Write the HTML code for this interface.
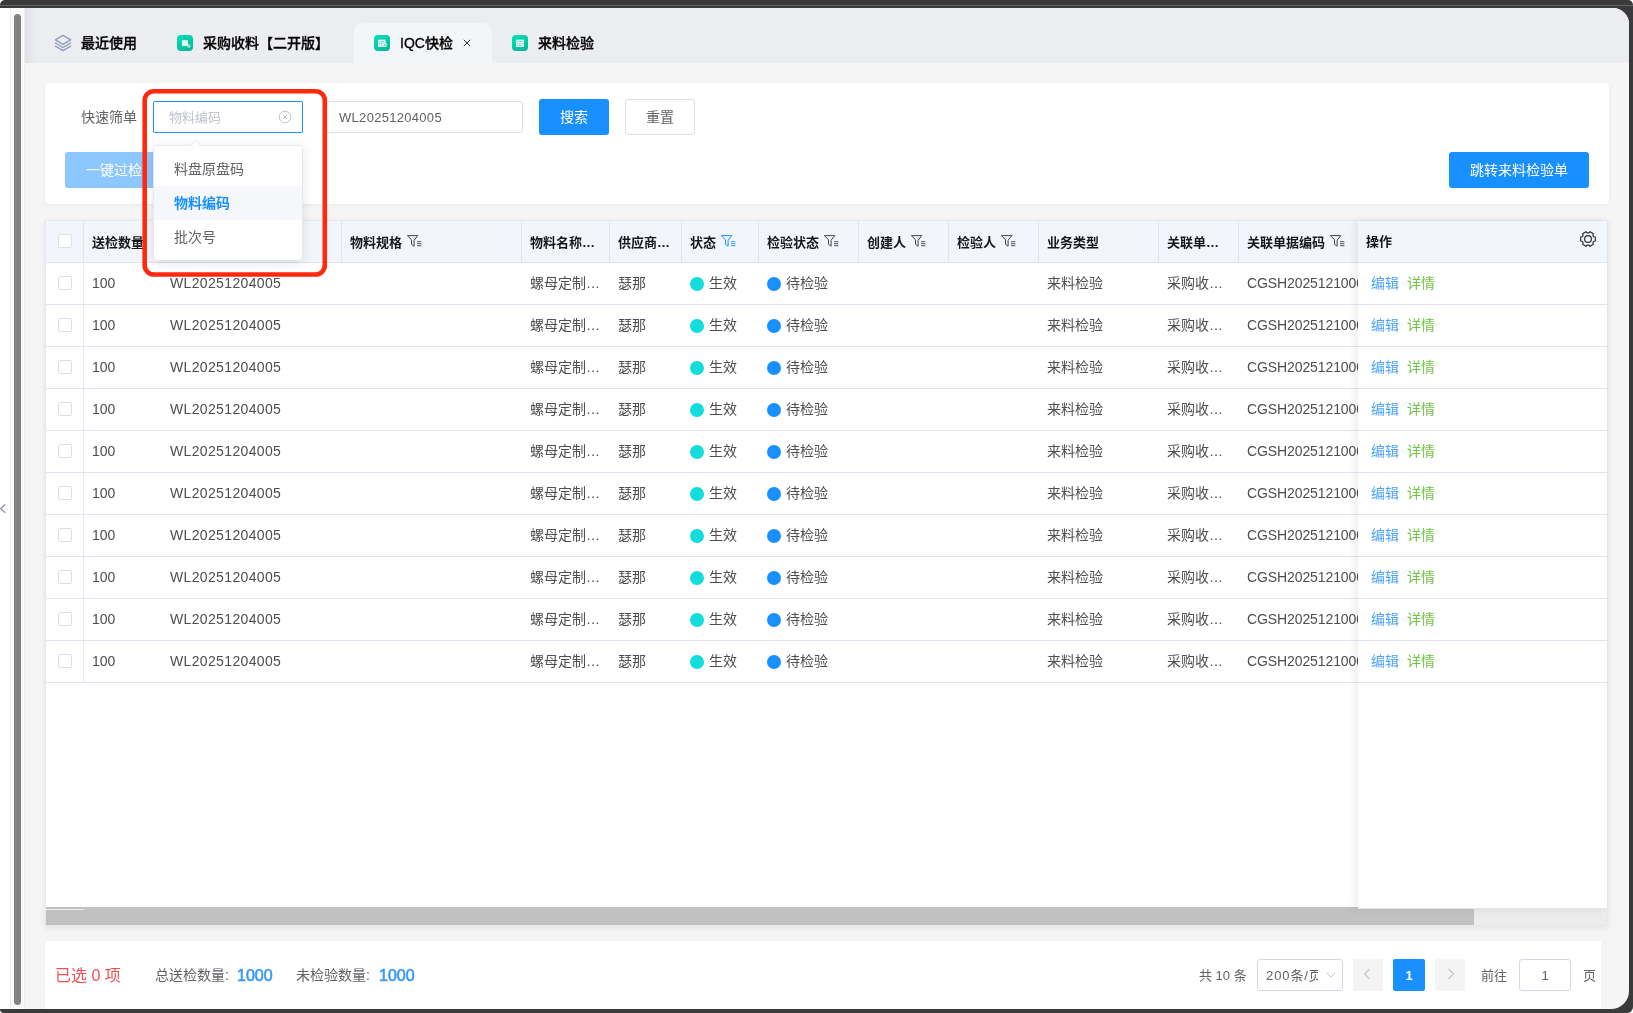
<!DOCTYPE html>
<html lang="zh-CN">
<head>
<meta charset="utf-8">
<title>IQC快检</title>
<style>
*{box-sizing:border-box;margin:0;padding:0}
html,body{width:1633px;height:1013px;overflow:hidden;background:#fff}
body{font-family:"Liberation Sans","Noto Sans CJK SC",sans-serif;font-size:13px;color:#606266;position:relative}
.abs{position:absolute}
#frame{left:0;top:0;width:1633px;height:1013px;background:#3a3a3a;border-radius:5px 5px 6px 4px}
#frameline{left:0;top:5px;width:1633px;height:1px;background:#636363}
#leftwhite{left:0;top:8px;width:10px;height:1001px;background:#fff}
#vtrack{left:10px;top:8px;width:15px;height:1001px;background:#fafafa;border-left:1px solid #ececec;border-right:1px solid #ececec}
#vthumb{left:14px;top:14px;width:7px;height:991px;background:#828282;border-radius:4px}
#app{left:25px;top:8px;width:1604px;height:1001px;background:#f5f5f5;border-radius:0 16px 18px 0;overflow:hidden}
/* everything inside #app uses page coords via offset wrapper */
#page{left:-25px;top:-8px;width:1633px;height:1013px;will-change:transform}
#tabbar{left:25px;top:8px;width:1604px;height:55px;background:#ecedf1}
#tabshadow{left:25px;top:8px;width:12px;height:55px;background:linear-gradient(90deg,rgba(0,0,0,.05),rgba(0,0,0,0))}
.tab{top:23px;height:40px;line-height:40px;font-size:14px;font-weight:500;color:#000;-webkit-text-stroke:.3px #000;white-space:nowrap}
.tab.active{background:#f4f5f9;border-radius:9px 9px 0 0}
.ticon{top:35px;width:16px;height:16px;border-radius:4px;background:linear-gradient(150deg,#06e2bc,#02b393)}
.panel{background:#fff;border-radius:4px;box-shadow:0 1px 4px rgba(0,0,0,.06)}
.btn{height:36px;line-height:36px;text-align:center;font-size:14px;border-radius:3px;color:#fff;background:#1890ff}
.inp{height:32px;border:1px solid #dcdfe6;border-radius:3px;background:#fff;line-height:30px;font-size:13px;color:#606266}

#tbl{left:45px;top:220px;width:1563px;height:706px;background:#fff;border:1px solid #e3e9f3;box-shadow:0 2px 6px rgba(0,0,0,.08)}
#thead{left:46px;top:221px;width:1561px;height:42px;background:#f2f5fc;border-bottom:1px solid #dfe6f0}
.vd{top:221px;width:1px;height:41px;background:#dfe6f0}
.th{top:222px;height:41px;line-height:41px;font-size:13px;font-weight:700;color:#15181d;white-space:nowrap}
.row{left:46px;width:1561px;height:42px;border-bottom:1px solid #dfe6f0}
.td{height:41px;line-height:41px;font-size:14px;color:#4e4e4e;white-space:nowrap;position:absolute;top:0}
.cb{width:14px;height:14px;border:1px solid #dcdfe6;border-radius:2px;background:#fff}
.dot{width:14px;height:14px;border-radius:50%;position:absolute;top:14px}
.fi{top:235px}

.ft{top:960px;height:32px;line-height:32px;white-space:nowrap}
.pg{top:959px;height:32px;background:#f4f4f5;border-radius:2px}
#redbox{left:143px;top:89px;width:184px;height:188px;border:5px solid #ff2d10;border-radius:14px}
#sel{left:153px;top:101px;width:150px;height:32px;border:1px solid #1890ff;border-radius:2px;background:#fff}
#dd{left:153px;top:145px;width:150px;height:116px;background:#fff;border:1px solid #e4e7ed;border-radius:4px;box-shadow:0 2px 12px rgba(0,0,0,.1)}
.opt{left:0;width:148px;height:34px;line-height:34px;padding-left:20px;font-size:14px;color:#606266}
</style>
</head>
<body>
<div id="frame" class="abs"></div>
<div id="frameline" class="abs"></div>
<div id="leftwhite" class="abs"></div>
<div id="vtrack" class="abs"></div>
<div id="vthumb" class="abs"></div>
<svg class="abs" style="left:0;top:502px" width="8" height="14" viewBox="0 0 8 14" fill="none" stroke="#8b90b4" stroke-width="1.200"><path d="M5.300 2.200L.7 6.500L5.300 10.800"/></svg>
<div id="app" class="abs"><div id="page" class="abs">
<div id="tabbar" class="abs"></div>
<div id="tabshadow" class="abs"></div>
<svg class="abs" style="left:54px;top:34px" width="18" height="18" viewBox="0 0 18 18" fill="none" stroke="#9298be" stroke-width="1.250" stroke-linejoin="round" stroke-linecap="round"><path d="M9 1.4 L16.6 5.9 L9 10.4 L1.4 5.9 Z"/><path d="M1.4 9 L9 13.5 L16.6 9"/><path d="M1.4 12.1 L9 16.6 L16.6 12.1"/></svg>
<div class="abs tab" style="left:81px">最近使用</div>
<div class="abs ticon" style="left:177px"></div>
<svg class="abs" style="left:177px;top:35px" width="16" height="16" viewBox="0 0 16 16"><path d="M5 5.600L5.800 5L6.600 5.600L7.400 5L8.200 5.600L9 5L9.800 5.600L10.600 5L11 5.400V11H5Z" fill="#e4faf4"/><circle cx="11.800" cy="10.900" r="1.500" fill="#5fd8bd" stroke="#d9f7ef" stroke-width=".7"/></svg>
<div class="abs tab" style="left:203px">采购收料【二开版】</div>
<div class="abs tab active" style="left:354px;width:138px"></div>
<div class="abs ticon" style="left:374px"></div>
<svg class="abs" style="left:374px;top:35px" width="16" height="16" viewBox="0 0 16 16"><path d="M4.100 5L5 4.300L5.900 5L6.900 4.300L7.900 5L8.900 4.300L9.900 5L10.800 4.300L11.600 5V12H4.100Z" fill="#e6faf5"/><path d="M5.200 6.600h.8M6.800 6.600h3.400M5.200 8.500h.8M6.800 8.500h2M5.200 10.400h.8M6.800 10.400h1.600" stroke="#3fcfb0" stroke-width=".8"/><circle cx="11" cy="9.900" r="1.800" fill="#7fe0c9" stroke="#e6faf5" stroke-width=".8"/></svg>
<div class="abs tab" style="left:400px">IQC快检</div>
<svg class="abs" style="left:463px;top:39px" width="8" height="8" viewBox="0 0 8 8" stroke="#333" stroke-width="1" fill="none"><path d="M.8 .8L7.2 7.2M7.2 .8L.8 7.2"/></svg>
<div class="abs ticon" style="left:512px"></div>
<svg class="abs" style="left:512px;top:35px" width="16" height="16" viewBox="0 0 16 16"><path d="M4.100 5L5.100 4.300L6.100 5L7.100 4.300L8.100 5L9.100 4.300L10.100 5L11.100 4.300L12 5V12H4.100Z" fill="#e6faf5"/><path d="M5.200 6.600h.9M7 6.600h3.800M5.200 8.500h.9M7 8.500h1.800M5.200 10.400h.9M7 10.400h2" stroke="#3fcfb0" stroke-width=".8"/><path d="M9.600 10.200L11.200 8.200" stroke="#3fcfb0" stroke-width="1"/></svg>
<div class="abs tab" style="left:538px">来料检验</div>

<div class="abs panel" style="left:45px;top:83px;width:1564px;height:121px"></div>
<div class="abs" style="left:81px;top:101px;height:32px;line-height:32px;font-size:14px;color:#606266">快速筛单</div>
<div class="abs inp" style="left:323px;top:101px;width:200px;padding-left:15px;line-height:32px;letter-spacing:.3px">WL20251204005</div>
<div class="abs btn" style="left:539px;top:99px;width:70px">搜索</div>
<div class="abs btn" style="left:625px;top:99px;width:70px;background:#fff;border:1px solid #dcdfe6;color:#606266;line-height:34px">重置</div>
<div class="abs btn" style="left:65px;top:152px;width:98px;background:#8cc8ff">一键过检</div>
<div class="abs btn" style="left:1449px;top:152px;width:140px">跳转来料检验单</div>

<div id="tbl" class="abs"></div>
<div id="thead" class="abs"></div>
<div class="abs vd" style="left:83px"></div><div class="abs vd" style="left:161px"></div><div class="abs vd" style="left:341px"></div><div class="abs vd" style="left:521px"></div><div class="abs vd" style="left:609px"></div><div class="abs vd" style="left:681px"></div><div class="abs vd" style="left:758px"></div><div class="abs vd" style="left:858px"></div><div class="abs vd" style="left:948px"></div><div class="abs vd" style="left:1038px"></div><div class="abs vd" style="left:1158px"></div><div class="abs vd" style="left:1238px"></div>
<div class="abs cb" style="left:58px;top:234px"></div>
<div class="abs th" style="left:92px">送检数量</div><div class="abs th" style="left:350px">物料规格</div><svg class="abs fi" style="left:407px" width="15" height="12" viewBox="0 0 15 12" fill="none" stroke="#444" stroke-width="1" stroke-linejoin="round" stroke-linecap="round"><path d="M.8 .6H10.800L7.100 5.200V11.200L4.500 9.300V5.200Z"/><path d="M10.400 6.700h3.600M10.400 8.700h3.600M10.400 10.700h3.600" stroke-width=".9"/></svg><div class="abs th" style="left:530px">物料名称…</div><div class="abs th" style="left:618px">供应商…</div><div class="abs th" style="left:690px">状态</div><svg class="abs fi" style="left:721px" width="15" height="12" viewBox="0 0 15 12" fill="none" stroke="#1890ff" stroke-width="1" stroke-linejoin="round" stroke-linecap="round"><path d="M.8 .6H10.800L7.100 5.200V11.200L4.500 9.300V5.200Z"/><path d="M10.400 6.700h3.600M10.400 8.700h3.600M10.400 10.700h3.600" stroke-width=".9"/></svg><div class="abs th" style="left:767px">检验状态</div><svg class="abs fi" style="left:824px" width="15" height="12" viewBox="0 0 15 12" fill="none" stroke="#444" stroke-width="1" stroke-linejoin="round" stroke-linecap="round"><path d="M.8 .6H10.800L7.100 5.200V11.200L4.500 9.300V5.200Z"/><path d="M10.400 6.700h3.600M10.400 8.700h3.600M10.400 10.700h3.600" stroke-width=".9"/></svg><div class="abs th" style="left:867px">创建人</div><svg class="abs fi" style="left:911px" width="15" height="12" viewBox="0 0 15 12" fill="none" stroke="#444" stroke-width="1" stroke-linejoin="round" stroke-linecap="round"><path d="M.8 .6H10.800L7.100 5.200V11.200L4.500 9.300V5.200Z"/><path d="M10.400 6.700h3.600M10.400 8.700h3.600M10.400 10.700h3.600" stroke-width=".9"/></svg><div class="abs th" style="left:957px">检验人</div><svg class="abs fi" style="left:1001px" width="15" height="12" viewBox="0 0 15 12" fill="none" stroke="#444" stroke-width="1" stroke-linejoin="round" stroke-linecap="round"><path d="M.8 .6H10.800L7.100 5.200V11.200L4.500 9.300V5.200Z"/><path d="M10.400 6.700h3.600M10.400 8.700h3.600M10.400 10.700h3.600" stroke-width=".9"/></svg><div class="abs th" style="left:1047px">业务类型</div><div class="abs th" style="left:1167px">关联单…</div><div class="abs th" style="left:1247px">关联单据编码</div><svg class="abs fi" style="left:1330px" width="15" height="12" viewBox="0 0 15 12" fill="none" stroke="#444" stroke-width="1" stroke-linejoin="round" stroke-linecap="round"><path d="M.8 .6H10.800L7.100 5.200V11.200L4.500 9.300V5.200Z"/><path d="M10.400 6.700h3.600M10.400 8.700h3.600M10.400 10.700h3.600" stroke-width=".9"/></svg>
<div class="abs row" style="top:263px"><div class="abs" style="left:37px;top:0;width:1px;height:41px;background:#e6ebf3"></div><div class="abs cb" style="left:12px;top:13px"></div><div class="td" style="left:46px">100</div><div class="td" style="left:124px;letter-spacing:.35px">WL20251204005</div><div class="td" style="left:484px">螺母定制…</div><div class="td" style="left:572px">瑟那</div><div class="dot" style="left:644px;background:#13dcdc"></div><div class="td" style="left:663px">生效</div><div class="dot" style="left:721px;background:#1890ff"></div><div class="td" style="left:740px">待检验</div><div class="td" style="left:1001px">来料检验</div><div class="td" style="left:1121px">采购收…</div><div class="td" style="left:1201px;letter-spacing:-.1px">CGSH2025121000</div></div>
<div class="abs row" style="top:305px"><div class="abs" style="left:37px;top:0;width:1px;height:41px;background:#e6ebf3"></div><div class="abs cb" style="left:12px;top:13px"></div><div class="td" style="left:46px">100</div><div class="td" style="left:124px;letter-spacing:.35px">WL20251204005</div><div class="td" style="left:484px">螺母定制…</div><div class="td" style="left:572px">瑟那</div><div class="dot" style="left:644px;background:#13dcdc"></div><div class="td" style="left:663px">生效</div><div class="dot" style="left:721px;background:#1890ff"></div><div class="td" style="left:740px">待检验</div><div class="td" style="left:1001px">来料检验</div><div class="td" style="left:1121px">采购收…</div><div class="td" style="left:1201px;letter-spacing:-.1px">CGSH2025121000</div></div>
<div class="abs row" style="top:347px"><div class="abs" style="left:37px;top:0;width:1px;height:41px;background:#e6ebf3"></div><div class="abs cb" style="left:12px;top:13px"></div><div class="td" style="left:46px">100</div><div class="td" style="left:124px;letter-spacing:.35px">WL20251204005</div><div class="td" style="left:484px">螺母定制…</div><div class="td" style="left:572px">瑟那</div><div class="dot" style="left:644px;background:#13dcdc"></div><div class="td" style="left:663px">生效</div><div class="dot" style="left:721px;background:#1890ff"></div><div class="td" style="left:740px">待检验</div><div class="td" style="left:1001px">来料检验</div><div class="td" style="left:1121px">采购收…</div><div class="td" style="left:1201px;letter-spacing:-.1px">CGSH2025121000</div></div>
<div class="abs row" style="top:389px"><div class="abs" style="left:37px;top:0;width:1px;height:41px;background:#e6ebf3"></div><div class="abs cb" style="left:12px;top:13px"></div><div class="td" style="left:46px">100</div><div class="td" style="left:124px;letter-spacing:.35px">WL20251204005</div><div class="td" style="left:484px">螺母定制…</div><div class="td" style="left:572px">瑟那</div><div class="dot" style="left:644px;background:#13dcdc"></div><div class="td" style="left:663px">生效</div><div class="dot" style="left:721px;background:#1890ff"></div><div class="td" style="left:740px">待检验</div><div class="td" style="left:1001px">来料检验</div><div class="td" style="left:1121px">采购收…</div><div class="td" style="left:1201px;letter-spacing:-.1px">CGSH2025121000</div></div>
<div class="abs row" style="top:431px"><div class="abs" style="left:37px;top:0;width:1px;height:41px;background:#e6ebf3"></div><div class="abs cb" style="left:12px;top:13px"></div><div class="td" style="left:46px">100</div><div class="td" style="left:124px;letter-spacing:.35px">WL20251204005</div><div class="td" style="left:484px">螺母定制…</div><div class="td" style="left:572px">瑟那</div><div class="dot" style="left:644px;background:#13dcdc"></div><div class="td" style="left:663px">生效</div><div class="dot" style="left:721px;background:#1890ff"></div><div class="td" style="left:740px">待检验</div><div class="td" style="left:1001px">来料检验</div><div class="td" style="left:1121px">采购收…</div><div class="td" style="left:1201px;letter-spacing:-.1px">CGSH2025121000</div></div>
<div class="abs row" style="top:473px"><div class="abs" style="left:37px;top:0;width:1px;height:41px;background:#e6ebf3"></div><div class="abs cb" style="left:12px;top:13px"></div><div class="td" style="left:46px">100</div><div class="td" style="left:124px;letter-spacing:.35px">WL20251204005</div><div class="td" style="left:484px">螺母定制…</div><div class="td" style="left:572px">瑟那</div><div class="dot" style="left:644px;background:#13dcdc"></div><div class="td" style="left:663px">生效</div><div class="dot" style="left:721px;background:#1890ff"></div><div class="td" style="left:740px">待检验</div><div class="td" style="left:1001px">来料检验</div><div class="td" style="left:1121px">采购收…</div><div class="td" style="left:1201px;letter-spacing:-.1px">CGSH2025121000</div></div>
<div class="abs row" style="top:515px"><div class="abs" style="left:37px;top:0;width:1px;height:41px;background:#e6ebf3"></div><div class="abs cb" style="left:12px;top:13px"></div><div class="td" style="left:46px">100</div><div class="td" style="left:124px;letter-spacing:.35px">WL20251204005</div><div class="td" style="left:484px">螺母定制…</div><div class="td" style="left:572px">瑟那</div><div class="dot" style="left:644px;background:#13dcdc"></div><div class="td" style="left:663px">生效</div><div class="dot" style="left:721px;background:#1890ff"></div><div class="td" style="left:740px">待检验</div><div class="td" style="left:1001px">来料检验</div><div class="td" style="left:1121px">采购收…</div><div class="td" style="left:1201px;letter-spacing:-.1px">CGSH2025121000</div></div>
<div class="abs row" style="top:557px"><div class="abs" style="left:37px;top:0;width:1px;height:41px;background:#e6ebf3"></div><div class="abs cb" style="left:12px;top:13px"></div><div class="td" style="left:46px">100</div><div class="td" style="left:124px;letter-spacing:.35px">WL20251204005</div><div class="td" style="left:484px">螺母定制…</div><div class="td" style="left:572px">瑟那</div><div class="dot" style="left:644px;background:#13dcdc"></div><div class="td" style="left:663px">生效</div><div class="dot" style="left:721px;background:#1890ff"></div><div class="td" style="left:740px">待检验</div><div class="td" style="left:1001px">来料检验</div><div class="td" style="left:1121px">采购收…</div><div class="td" style="left:1201px;letter-spacing:-.1px">CGSH2025121000</div></div>
<div class="abs row" style="top:599px"><div class="abs" style="left:37px;top:0;width:1px;height:41px;background:#e6ebf3"></div><div class="abs cb" style="left:12px;top:13px"></div><div class="td" style="left:46px">100</div><div class="td" style="left:124px;letter-spacing:.35px">WL20251204005</div><div class="td" style="left:484px">螺母定制…</div><div class="td" style="left:572px">瑟那</div><div class="dot" style="left:644px;background:#13dcdc"></div><div class="td" style="left:663px">生效</div><div class="dot" style="left:721px;background:#1890ff"></div><div class="td" style="left:740px">待检验</div><div class="td" style="left:1001px">来料检验</div><div class="td" style="left:1121px">采购收…</div><div class="td" style="left:1201px;letter-spacing:-.1px">CGSH2025121000</div></div>
<div class="abs row" style="top:641px"><div class="abs" style="left:37px;top:0;width:1px;height:41px;background:#e6ebf3"></div><div class="abs cb" style="left:12px;top:13px"></div><div class="td" style="left:46px">100</div><div class="td" style="left:124px;letter-spacing:.35px">WL20251204005</div><div class="td" style="left:484px">螺母定制…</div><div class="td" style="left:572px">瑟那</div><div class="dot" style="left:644px;background:#13dcdc"></div><div class="td" style="left:663px">生效</div><div class="dot" style="left:721px;background:#1890ff"></div><div class="td" style="left:740px">待检验</div><div class="td" style="left:1001px">来料检验</div><div class="td" style="left:1121px">采购收…</div><div class="td" style="left:1201px;letter-spacing:-.1px">CGSH2025121000</div></div>
<div class="abs" style="left:46px;top:907px;width:1561px;height:18px;background:#ececec"></div><div class="abs" style="left:46px;top:907px;width:1428px;height:18px;background:#c1c1c1"></div>
<div class="abs" style="left:46px;top:909px;width:38px;height:1px;background:#e9eef6"></div><div class="abs" style="left:1358px;top:221px;width:249px;height:688px;background:#fff;border-bottom:1px solid #dfe6f0;box-shadow:-3px 0 8px rgba(0,0,0,.08)"></div><div class="abs" style="left:1358px;top:221px;width:249px;height:42px;background:#f2f5fc;border-bottom:1px solid #dfe6f0"></div><div class="abs th" style="left:1366px;top:221px">操作</div>
<svg class="abs" style="left:1579.100px;top:230.300px" width="18" height="18" viewBox="0 0 18 18" fill="none" stroke="#2b2b2b" stroke-width="1.150" stroke-linejoin="round"><circle cx="9" cy="9" r="3.400"/><path d="M14.79 6.78L16.34 7.03L16.34 10.97L14.79 11.22L13.82 12.90L14.37 14.37L10.97 16.34L9.97 15.12L8.03 15.12L7.03 16.34L3.63 14.37L4.18 12.90L3.21 11.22L1.66 10.97L1.66 7.03L3.21 6.78L4.18 5.10L3.63 3.63L7.03 1.66L8.03 2.88L9.97 2.88L10.97 1.66L14.37 3.63L13.82 5.10Z"/></svg>
<div class="abs" style="left:1358px;top:263px;width:249px;height:42px;border-bottom:1px solid #dfe6f0"><div class="td" style="left:13px;font-size:14px;color:#4da3fb">编辑</div><div class="td" style="left:49px;font-size:14px;color:#70c445">详情</div></div>
<div class="abs" style="left:1358px;top:305px;width:249px;height:42px;border-bottom:1px solid #dfe6f0"><div class="td" style="left:13px;font-size:14px;color:#4da3fb">编辑</div><div class="td" style="left:49px;font-size:14px;color:#70c445">详情</div></div>
<div class="abs" style="left:1358px;top:347px;width:249px;height:42px;border-bottom:1px solid #dfe6f0"><div class="td" style="left:13px;font-size:14px;color:#4da3fb">编辑</div><div class="td" style="left:49px;font-size:14px;color:#70c445">详情</div></div>
<div class="abs" style="left:1358px;top:389px;width:249px;height:42px;border-bottom:1px solid #dfe6f0"><div class="td" style="left:13px;font-size:14px;color:#4da3fb">编辑</div><div class="td" style="left:49px;font-size:14px;color:#70c445">详情</div></div>
<div class="abs" style="left:1358px;top:431px;width:249px;height:42px;border-bottom:1px solid #dfe6f0"><div class="td" style="left:13px;font-size:14px;color:#4da3fb">编辑</div><div class="td" style="left:49px;font-size:14px;color:#70c445">详情</div></div>
<div class="abs" style="left:1358px;top:473px;width:249px;height:42px;border-bottom:1px solid #dfe6f0"><div class="td" style="left:13px;font-size:14px;color:#4da3fb">编辑</div><div class="td" style="left:49px;font-size:14px;color:#70c445">详情</div></div>
<div class="abs" style="left:1358px;top:515px;width:249px;height:42px;border-bottom:1px solid #dfe6f0"><div class="td" style="left:13px;font-size:14px;color:#4da3fb">编辑</div><div class="td" style="left:49px;font-size:14px;color:#70c445">详情</div></div>
<div class="abs" style="left:1358px;top:557px;width:249px;height:42px;border-bottom:1px solid #dfe6f0"><div class="td" style="left:13px;font-size:14px;color:#4da3fb">编辑</div><div class="td" style="left:49px;font-size:14px;color:#70c445">详情</div></div>
<div class="abs" style="left:1358px;top:599px;width:249px;height:42px;border-bottom:1px solid #dfe6f0"><div class="td" style="left:13px;font-size:14px;color:#4da3fb">编辑</div><div class="td" style="left:49px;font-size:14px;color:#70c445">详情</div></div>
<div class="abs" style="left:1358px;top:641px;width:249px;height:42px;border-bottom:1px solid #dfe6f0"><div class="td" style="left:13px;font-size:14px;color:#4da3fb">编辑</div><div class="td" style="left:49px;font-size:14px;color:#70c445">详情</div></div>

<div class="abs" style="left:45px;top:941px;width:1556px;height:70px;background:#fff"></div>
<div class="abs ft" style="left:55px;font-size:16px;color:#f0504f">已选 0 项</div>
<div class="abs ft" style="left:155px;top:959px;font-size:14px;color:#606266">总送检数量:</div>
<div class="abs ft" style="left:237px;font-size:16px;font-weight:500;color:#3a99f7;-webkit-text-stroke:.6px #3a99f7">1000</div>
<div class="abs ft" style="left:296px;top:959px;font-size:14px;color:#606266">未检验数量:</div>
<div class="abs ft" style="left:379px;font-size:16px;font-weight:500;color:#3a99f7;-webkit-text-stroke:.6px #3a99f7">1000</div>
<div class="abs ft" style="left:1199px;font-size:13px;color:#606266">共 10 条</div>
<div class="abs inp" style="left:1257px;top:959px;width:86px;height:32px;border-color:#d4d9e6"><div class="abs" style="left:8px;top:0;width:52px;overflow:hidden;white-space:nowrap;font-size:13px;line-height:31px;letter-spacing:.9px;color:#606266">200条/页</div><svg class="abs" style="left:68px;top:12px" width="10" height="6" viewBox="0 0 10 6" fill="none" stroke="#c0c4cc" stroke-width="1"><path d="M.8 .8L5 5L9.200 .8"/></svg></div>
<div class="abs pg" style="left:1353px;width:30px"><svg width="8" height="12" viewBox="0 0 8 12" fill="none" stroke="#c0c4cc" stroke-width="1.1" style="position:absolute;left:10px;top:9px"><path d="M6.5 1L1.500 6L6.500 11"/></svg></div>
<div class="abs pg" style="left:1393px;width:32px;background:#1890ff;color:#fff;font-weight:700;font-size:13px;text-align:center;line-height:33px">1</div>
<div class="abs pg" style="left:1435px;width:30px"><svg width="8" height="12" viewBox="0 0 8 12" fill="none" stroke="#c0c4cc" stroke-width="1.1" style="position:absolute;left:12px;top:9px"><path d="M1.500 1L6.500 6L1.500 11"/></svg></div>
<div class="abs ft" style="left:1481px;font-size:13px;color:#606266">前往</div>
<div class="abs inp" style="left:1519px;top:959px;width:52px;height:32px;text-align:center;line-height:32px;border-color:#d4d9e6">1</div>
<div class="abs ft" style="left:1583px;font-size:13px;color:#606266">页</div>

<div id="dd" class="abs"><div class="abs opt" style="top:6px">料盘原盘码</div><div class="abs opt" style="top:40px;background:#f5f7fa;color:#1890ff;font-weight:700">物料编码</div><div class="abs opt" style="top:74px">批次号</div></div>
<svg class="abs" style="left:190px;top:140px" width="11" height="7" viewBox="0 0 11 7"><path d="M0 6L5.500 .6L11 6" fill="#fff" stroke="#e4e7ed" stroke-width="1"/><path d="M0.800 6.500H10.200" stroke="#fff" stroke-width="1.400"/></svg>
<div id="sel" class="abs"><div class="abs" style="left:15px;top:0;line-height:32px;font-size:13px;color:#c0c4cc">物料编码</div><svg class="abs" style="left:124.400px;top:8.400px" width="14" height="14" viewBox="0 0 14 14" fill="none" stroke="#c0c4cc" stroke-width="1"><circle cx="7" cy="7" r="5.800"/><path d="M4.900 4.900L9.100 9.100M9.100 4.900L4.900 9.100"/></svg></div>
<svg class="abs" style="left:140px;top:86px" width="192" height="196" viewBox="0 0 192 196"><rect x="4.700" y="5.200" width="180.100" height="183.300" rx="9.200" fill="none" stroke="#ff2a0e" stroke-width="4.600"/></svg>

</div></div>
</body>
</html>
